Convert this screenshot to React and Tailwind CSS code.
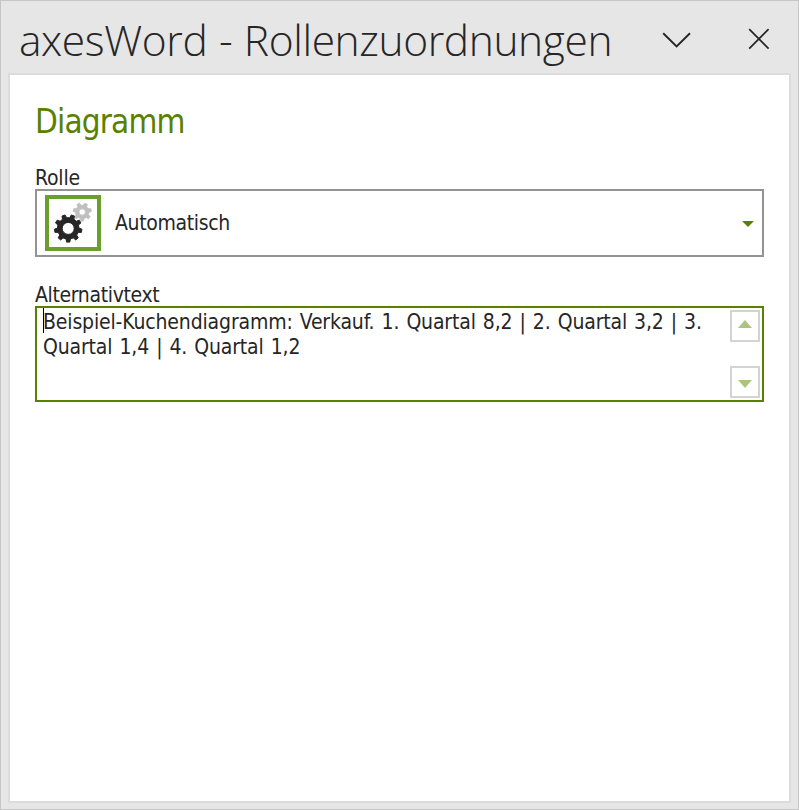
import React, { useState } from 'react';

// Outline of a cog wheel with its centre hole, first tooth at `start` degrees
const gearPath = (cx, cy, outer, inner, hole, teeth, start) => {
  const points = [];
  const step = 360 / teeth;
  const at = (radius, deg) => {
    const rad = (deg * Math.PI) / 180;
    return `${(cx + radius * Math.cos(rad)).toFixed(2)} ${(cy + radius * Math.sin(rad)).toFixed(2)}`;
  };

  for (let i = 0; i < teeth; i++) {
    const mid = start + i * step;
    points.push(at(inner, mid - step * 0.29));
    points.push(at(outer, mid - step * 0.17));
    points.push(at(outer, mid + step * 0.17));
    points.push(at(inner, mid + step * 0.29));
  }

  return `M${points.join('L')}ZM${cx - hole} ${cy}a${hole} ${hole} 0 1 0 ${hole * 2} 0a${hole} ${hole} 0 1 0 ${-hole * 2} 0Z`;
};

const GearsIcon = () => (
  <svg width="48" height="48" viewBox="0 0 48 48" fillRule="evenodd" strokeLinejoin="round">
    <path d={gearPath(33.2, 13, 9.2, 6.8, 3.2, 7, -13)} fill="#bfbfbf" stroke="#bfbfbf" strokeWidth="0.8" />
    <path d={gearPath(19.2, 29.4, 13.8, 10.8, 6, 9, 90)} fill="#262626" stroke="#262626" strokeWidth="1" />
  </svg>
);

const TitleBar = ({ title }) => (
  <header className="flex h-[72px] shrink-0 items-start pl-[18px] pr-7">
    <h1 className="mt-[9px] w-[610px] shrink-0 whitespace-nowrap font-['Open_Sans'] text-[42.5px] font-[350] leading-[60px] tracking-[-0.4px] [word-spacing:1px] text-[#262626]">
      {title}
    </h1>
    <button className="ml-[33px] mt-[30px]" aria-label="Optionen">
      <svg width="30" height="18" viewBox="0 0 30 18" fill="none" stroke="#262626" strokeWidth="1.9">
        <path d="M1.2 2.2L14.6 15.4L28 2.2" />
      </svg>
    </button>
    <button className="ml-auto mt-[27px]" aria-label="Schließen">
      <svg width="22" height="22" viewBox="0 0 22 22" fill="none" stroke="#262626" strokeWidth="1.7">
        <path d="M1.2 1.2L20.6 20.6M20.6 1.2L1.2 20.6" />
      </svg>
    </button>
  </header>
);

const RoleSelect = ({ value }) => (
  <button className="flex h-[68px] w-full items-center border-2 border-[#939393] bg-white pl-2 pr-2 text-left">
    <span className="flex h-14 w-14 items-center justify-center border-4 border-[#6b9f2b]">
      <GearsIcon />
    </span>
    <span className="ml-[14px] grow whitespace-nowrap pt-0.5 text-[21px] tracking-[-0.35px]">{value}</span>
    <svg className="mt-0.5" width="12" height="6" viewBox="0 0 12 6" fill="#5a8000">
      <path d="M0 0H12L6 6Z" />
    </svg>
  </button>
);

const ScrollButton = ({ up }) => (
  <button className="flex h-8 w-[30px] items-center justify-center border-2 border-[#d3d3d3] bg-white">
    <svg className={up ? '-mt-1' : 'mt-1'} width="14" height="8" viewBox="0 0 14 8" fill="#acc480">
      <path d={up ? 'M0 8H14L7 0Z' : 'M0 0H14L7 8Z'} />
    </svg>
  </button>
);

const AltTextField = ({ lines }) => (
  <div className="flex h-24 border-2 border-[#5a8000] bg-white p-0.5">
    <span className="-mt-0.5 ml-[4px] h-[25px] w-px shrink-0 bg-black" />
    <div className="grow whitespace-nowrap text-[21px] leading-[25px] tracking-[-0.15px] [word-spacing:1.25px]">
      {lines.map((line) => (
        <div key={line} className="-ml-px">
          {line}
        </div>
      ))}
    </div>
    <div className="flex flex-col justify-between">
      <ScrollButton up />
      <ScrollButton />
    </div>
  </div>
);

const App = () => {
  const [role] = useState('Automatisch');
  const [altText] = useState([
    'Beispiel-Kuchendiagramm: Verkauf. 1. Quartal 8,2 | 2. Quartal 3,2 | 3.',
    'Quartal 1,4 | 4. Quartal 1,2'
  ]);

  return (
    <div className="flex h-[810px] w-[799px] flex-col border border-[#c6c6c6] bg-[#e6e6e6] font-['DejaVu_Sans_Condensed','DejaVu_Sans',sans-serif] text-[#262626]">
      <TitleBar title="axesWord - Rollenzuordnungen" />
      <main className="mx-[7px] mb-1.5 grow border-2 border-[#dcdcdc] bg-white px-[25px] pt-[23px]">
        <h2 className="h-[48px] text-[33px] leading-[48px] tracking-[-0.85px] text-[#5a8000]">Diagramm</h2>
        <div className="mt-[19px] h-6 text-[21px] leading-[26px] tracking-[-0.2px]">Rolle</div>
        <RoleSelect value={role} />
        <div className="mt-[25px] h-6 text-[21px] leading-[26px] tracking-[-0.35px]">Alternativtext</div>
        <AltTextField lines={altText} />
      </main>
    </div>
  );
};

export default App;
